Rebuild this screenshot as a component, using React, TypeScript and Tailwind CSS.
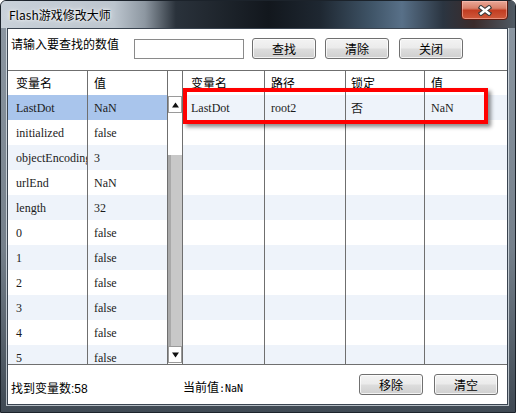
import React from "react";

type Row = [string, string];

const cjk = "font-['Noto_Sans_CJK_SC',sans-serif]";
const serif = "font-['Liberation_Serif','Noto_Sans_CJK_SC',serif]";

const vars: Row[] = [
  ["LastDot", "NaN"],
  ["initialized", "false"],
  ["objectEncoding", "3"],
  ["urlEnd", "NaN"],
  ["length", "32"],
  ["0", "false"],
  ["1", "false"],
  ["2", "false"],
  ["3", "false"],
  ["4", "false"],
  ["5", "false"],
];

const locked = [["LastDot", "root2", "否", "NaN"]];

function WinButton({ label, className = "" }: { label: string; className?: string }) {
  return (
    <button
      className={`h-[21px] w-[64px] shrink-0 rounded-[3px] border border-[#707070] bg-[linear-gradient(180deg,#f3f3f3_0%,#ebebeb_48%,#dddddd_52%,#cfcfcf_100%)] text-[12px] leading-none text-black shadow-[inset_0_0_0_1px_rgba(255,255,255,0.75)] ${cjk} ${className}`}
    >
      {label}
    </button>
  );
}

function Arrow({ down = false }: { down?: boolean }) {
  return (
    <svg width="7" height="6" viewBox="0 0 7 6">
      <polygon points={down ? "0,0.5 7,0.5 3.5,5.5" : "0,5.5 7,5.5 3.5,0.5"} fill="#111" />
    </svg>
  );
}

function VarList() {
  return (
    <div className="flex w-[175px] shrink-0 border-r border-[#6f6f6f]">
      <div className="flex w-[159px] flex-col overflow-hidden">
        <div className={`flex h-[24px] shrink-0 bg-white text-[12px] text-black ${cjk}`}>
          <div className="flex h-full w-[80px] items-center border-r border-[#6f6f6f] pl-[8px]">变量名</div>
          <div className="flex h-full flex-1 items-center pl-[6px]">值</div>
        </div>
        {vars.map(([name, value], i) => (
          <div
            key={name}
            className={`flex h-[25px] shrink-0 text-[12px] text-[#1b1b1b] ${serif} ${
              i === 0 ? "bg-[#a9c5ec]" : i % 2 === 0 ? "bg-[#eef3fa]" : "bg-white"
            }`}
          >
            <div className="flex h-full w-[80px] items-center overflow-hidden whitespace-nowrap border-r border-[#6f6f6f] pl-[8px]">
              {name}
            </div>
            <div className="flex h-full flex-1 items-center pl-[6px]">{value}</div>
          </div>
        ))}
      </div>
      {/* vertical scrollbar */}
      <div className="flex w-[15px] shrink-0 flex-col border-l border-[#6f6f6f] bg-white">
        <div className="h-[24px] shrink-0" />
        <div className="mt-px flex h-[17px] shrink-0 items-center justify-center border border-[#9a9a9a] bg-white">
          <Arrow />
        </div>
        <div className="h-[42px] shrink-0 bg-white" />
        <div className="flex-1 border-l-[3px] border-[#a9a9a9] bg-[#c8c8c8]" />
        <div className="mb-px flex h-[17px] shrink-0 items-center justify-center border border-[#9a9a9a] bg-white">
          <Arrow down />
        </div>
      </div>
    </div>
  );
}

function LockedList() {
  const cols = [
    "w-[82px] pl-[8px] border-r",
    "w-[81px] pl-[6px] border-r",
    "w-[79px] pl-[5px] border-r",
    "flex-1 pl-[6px]",
  ];
  const heads = ["变量名", "路径", "锁定", "值"];
  return (
    <div className="relative flex flex-1 flex-col overflow-hidden">
      <div className={`flex h-[24px] shrink-0 bg-white text-[12px] text-black ${cjk}`}>
        {heads.map((h, c) => (
          <div key={h} className={`flex h-full items-center border-[#6f6f6f] ${cols[c]}`}>
            {h}
          </div>
        ))}
      </div>
      {Array.from({ length: 11 }).map((_, i) => {
        const row = locked[i];
        return (
          <div
            key={i}
            className={`flex h-[25px] shrink-0 text-[12px] text-[#1b1b1b] ${serif} ${
              i % 2 === 0 ? "bg-[#eef3fa]" : "bg-white"
            }`}
          >
            {cols.map((cls, c) => (
              <div key={c} className={`flex h-full items-center border-[#6f6f6f] ${cls}`}>
                {row ? <span className={c === 2 ? cjk : ""}>{row[c]}</span> : null}
              </div>
            ))}
          </div>
        );
      })}
      {/* highlight around the locked row */}
      <div className="absolute left-0 top-[17px] h-[36px] w-[305px] border-4 border-[#ff0000] shadow-[3px_3px_4px_rgba(0,0,0,0.45)]" />
    </div>
  );
}

export default function App() {
  return (
    <div className="flex h-[413px] w-[516px] flex-col overflow-hidden rounded-t-[6px] border border-[#1c232b] bg-[linear-gradient(180deg,#8e99a4_0%,#75808b_60%,#3f4953_100%)]">
      {/* title bar */}
      <div className="relative flex h-[27px] shrink-0 bg-[linear-gradient(90deg,#c9d1d9_0%,#bcc5ce_22%,#8d97a1_28%,#2a323b_34%,#12171d_52%,#1e2731_62%,#3f5467_72%,#587088_78%,#2b3541_86%,#3a2b2b_92%,#505a64_100%)]">
        <span className={`ml-[8px] mt-[7px] text-[12px] leading-[14px] text-black [text-shadow:0_0_6px_#ffffff,0_0_3px_#ffffff] ${cjk}`}>
          Flash游戏修改大师
        </span>
        <div className="-mt-px ml-auto mr-[7px] flex h-[20px] w-[47px] items-center justify-center rounded-b-[4px] border border-[#5a1a10] bg-[linear-gradient(180deg,#e9a898_0%,#d9806a_40%,#c23d22_52%,#cf5a3c_100%)] shadow-[inset_0_0_0_1px_rgba(255,200,190,0.5)]">
          <svg width="14" height="11" viewBox="0 0 14 11">
            <path d="M3 2.5 L11 8.5 M11 2.5 L3 8.5" stroke="#3b3b3b" strokeWidth="4.6" strokeLinecap="square" />
            <path d="M3 2.5 L11 8.5 M11 2.5 L3 8.5" stroke="#ffffff" strokeWidth="2.4" strokeLinecap="square" />
          </svg>
        </div>
      </div>

      {/* client area */}
      <div className="flex flex-1 pb-[7px] pl-[6px] pr-[7px]">
        <div className="flex flex-1 flex-col border border-[#3a4450] bg-white shadow-[0_0_0_1px_rgba(230,236,242,0.7)]">
          <div className="flex h-[41px] shrink-0 items-start">
            <span className={`ml-[3px] mt-[8px] w-[123px] text-[12px] leading-[14px] text-black ${cjk}`}>
              请输入要查找的数值
            </span>
            <input className="mt-[10px] h-[20px] w-[110px] border border-[#8a8a8a] bg-white outline-none" />
            <WinButton label="查找" className="ml-[8px] mt-[9px]" />
            <WinButton label="清除" className="ml-[9px] mt-[9px]" />
            <WinButton label="关闭" className="ml-[10px] mt-[9px]" />
          </div>

          <div className="flex h-[295px] shrink-0 border-y border-[#6f6f6f]">
            <VarList />
            <LockedList />
          </div>

          <div className={`flex h-[39px] shrink-0 items-center text-[12px] text-black ${cjk}`}>
            <span className="ml-[3px] mt-[7px] w-[172px] leading-[14px]">
              找到变量数<span className="font-['Liberation_Sans',sans-serif]">:58</span>
            </span>
            <span className="mt-[7px] leading-[14px]">
              当前值<span className="font-['DejaVu_Sans_Mono',monospace] text-[10px]">:NaN</span>
            </span>
            <WinButton label="移除" className="ml-auto" />
            <WinButton label="清空" className="ml-[11px] mr-[9px]" />
          </div>
        </div>
      </div>
    </div>
  );
}
